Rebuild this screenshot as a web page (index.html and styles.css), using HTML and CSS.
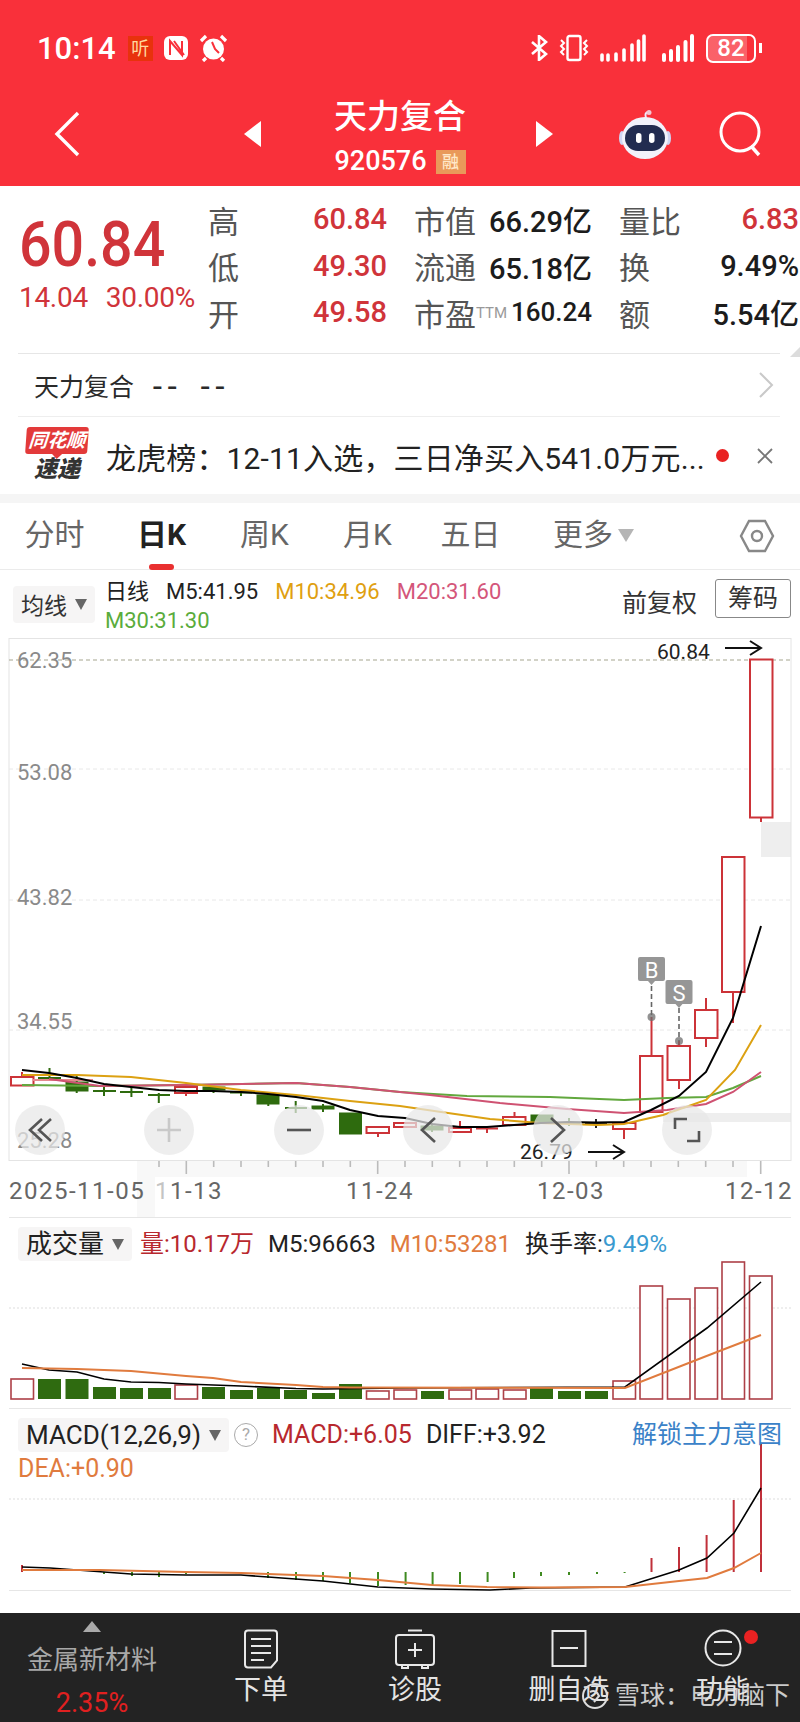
FILE: index.html
```html
<!DOCTYPE html>
<html lang="zh-CN">
<head>
  <meta charset="UTF-8">
  <meta name="viewport" content="width=device-width, initial-scale=1.0">
  <title>天力复合 920576</title>
  <link rel="stylesheet" href="styles.css">
</head>
<body>
  <header class="topbar">
    <div class="status">
      <span class="clock">10:14</span>
      <span class="app-badge">听</span>
      <svg width="26" height="26" viewBox="0 0 26 26"><rect x="1" y="1" width="24" height="24" rx="6" fill="#fff"/><path d="M7 20V6l12 14V6M11 6l10 14" fill="none" stroke="#f9303a" stroke-width="2"/></svg>
      <svg width="29" height="28" viewBox="0 0 29 28"><circle cx="14.500" cy="15" r="10.500" fill="#fff"/><path d="M13 8l3 7 4 4" fill="none" stroke="#f9303a" stroke-width="2"/><path d="M2 7l5-5M27 7l-5-5M7 24l-3 3M22 24l3 3" stroke="#fff" stroke-width="3.200"/></svg>
      <span class="spacer"></span>
      <svg width="18" height="26" viewBox="0 0 18 26"><path d="M2 7l14 12-7 6V1l7 6L2 19" fill="none" stroke="#fff" stroke-width="2.600"/></svg>
      <svg width="32" height="28" viewBox="0 0 32 28"><rect x="9.500" y="2" width="13" height="24" rx="2" fill="none" stroke="#fff" stroke-width="2.400"/><path d="M3 6l3 3-3 3 3 3-3 3 3 3M29 6l-3 3 3 3-3 3 3 3-3 3" fill="none" stroke="#fff" stroke-width="2"/></svg>
      <svg width="46" height="28" viewBox="0 0 46 28"><path d="M2 21v5M8 21v5M16 20v6M24 16v10M32 11v15M38.500 7v19M44 2v24" stroke="#fff" stroke-width="3.600" stroke-linecap="round"/></svg>
      <svg class="signal-b" width="32" height="28" viewBox="0 0 32 28"><path d="M2 21v5M9 17v9M16 13v13M23.500 8v18M30 2v24" stroke="#fff" stroke-width="4" stroke-linecap="round"/></svg>
      <span class="battery">82</span>
      <span class="battery-tip"></span>
    </div>
    <nav class="nav">
      <svg class="back" width="28" height="46" viewBox="0 0 28 46"><path d="M25 2L4 23l21 21" fill="none" stroke="#fff" stroke-width="3.400"/></svg>
      <span class="arrow arrow-left"></span>
      <div class="title">
        <h1>天力复合</h1>
        <p>920576<span class="rong">融</span></p>
      </div>
      <span class="arrow arrow-right"></span>
      <svg class="robot" width="54" height="50" viewBox="0 0 54 50">
        <path d="M28 9q-2-6 3-6" fill="none" stroke="#eef" stroke-width="2"/>
        <circle cx="31" cy="3.500" r="2.500" fill="#f3c6d2"/>
        <ellipse cx="4" cy="29" rx="3" ry="7" fill="#cfd4f2"/>
        <ellipse cx="50" cy="29" rx="3" ry="7" fill="#cfd4f2"/>
        <ellipse cx="27" cy="29" rx="23" ry="21" fill="#f2f2fb"/>
        <rect x="7" y="16" width="40" height="26" rx="13" fill="#222c50"/>
        <rect x="18" y="24" width="5.500" height="10" rx="2.700" fill="#fff"/>
        <rect x="31" y="24" width="5.500" height="10" rx="2.700" fill="#fff"/>
      </svg>
      <svg class="search" width="44" height="46" viewBox="0 0 44 46"><circle cx="21" cy="21" r="19" fill="none" stroke="#fff" stroke-width="3"/><path d="M32 35l8 9" stroke="#fff" stroke-width="3.400"/></svg>
    </nav>
  </header>

  <section class="quote">
    <div class="price-box">
      <div class="price">60.84</div>
      <div class="change"><span>14.04</span><span>30.00%</span></div>
    </div>
    <div class="stats">
      <div class="stat"><span class="lbl">高</span><span class="val red">60.84</span></div>
      <div class="stat"><span class="lbl">市值</span><span class="val">66.29亿</span></div>
      <div class="stat"><span class="lbl">量比</span><span class="val red">6.83</span></div>
      <div class="stat"><span class="lbl">低</span><span class="val red">49.30</span></div>
      <div class="stat"><span class="lbl">流通</span><span class="val">65.18亿</span></div>
      <div class="stat"><span class="lbl">换</span><span class="val">9.49%</span></div>
      <div class="stat"><span class="lbl">开</span><span class="val red">49.58</span></div>
      <div class="stat"><span class="lbl">市盈<sup class="ttm">TTM</sup></span><span class="val small">160.24</span></div>
      <div class="stat"><span class="lbl">额</span><span class="val">5.54亿</span></div>
    </div>
    <span class="corner"></span>
  </section>

  <section class="name-row">
    <span>天力复合</span><span class="dash">--</span><span class="dash">--</span>
    <svg class="chev" width="16" height="26" viewBox="0 0 16 26"><path d="M2 1l12 12L2 25" fill="none" stroke="#c9c9c9" stroke-width="2"/></svg>
  </section>

  <section class="news">
    <div class="logo">
      <span class="logo-top">同花顺</span>
      <span class="logo-bottom">速递</span>
    </div>
    <p class="headline">龙虎榜：12-11入选，三日净买入541.0万元...</p>
    <span class="dot"></span>
    <svg class="close" width="18" height="18" viewBox="0 0 18 18"><path d="M2 2l14 14M16 2L2 16" stroke="#777" stroke-width="1.800"/></svg>
  </section>

  <div class="band"></div>

  <nav class="tabs">
    <span class="tab">分时</span>
    <span class="tab active">日K</span>
    <span class="tab">周K</span>
    <span class="tab">月K</span>
    <span class="tab">五日</span>
    <span class="tab more">更多<i class="caret"></i></span>
    <svg class="hex" width="36" height="36" viewBox="0 0 36 36"><path d="M10 3h16l8 15-8 15H10L2 18z" fill="none" stroke="#888" stroke-width="2.400"/><circle cx="18" cy="18" r="5" fill="none" stroke="#888" stroke-width="2.400"/></svg>
  </nav>

  <section class="legend">
    <div class="selector">均线<i class="caret dark"></i></div>
    <div class="ma-list">
      <span class="ma-name">日线</span>
      <span>M5:41.95</span>
      <span class="c-yellow">M10:34.96</span>
      <span class="c-pink">M20:31.60</span>
      <span class="c-green ma-wrap">M30:31.30</span>
    </div>
    <span class="fq">前复权</span>
    <span class="chip">筹码</span>
  </section>

  <section class="kline">
    <svg class="plot" width="800" height="579" viewBox="0 638 800 579">
      <rect class="ghost" x="761" y="822" width="30" height="35"/>
      <rect class="ghost" x="663" y="1113" width="128" height="9"/>
      <rect class="ghost faint" x="137" y="1160" width="610" height="17"/>
      <rect class="ghost faint" x="137" y="1160" width="18" height="57"/>
      <rect class="frame" x="9" y="638.500" width="782" height="522"/>
      <line class="top-grid" x1="9" y1="660" x2="791" y2="660"/>
      <line class="grid" x1="9" y1="769" x2="791" y2="769"/>
      <line class="grid" x1="9" y1="900" x2="791" y2="900"/>
      <line class="grid" x1="9" y1="1030" x2="791" y2="1030"/>

      <text class="axis-y" x="17" y="668">62.35</text>
      <text class="axis-y" x="17" y="780">53.08</text>
      <text class="axis-y" x="17" y="905">43.82</text>
      <text class="axis-y" x="17" y="1029">34.55</text>
      <text class="axis-y" x="17" y="1148">25.28</text>

      <g class="down">
        <path d="M49.500 1068v12M38 1078h23"/>
        <path d="M76.700 1076v17"/><rect x="66" y="1082" width="22" height="9"/>
        <path d="M104 1086v10M93 1091h23"/>
        <path d="M131.400 1087v10M120 1092h23"/>
        <path d="M158.800 1093v10M148 1095h22"/>
        <path d="M213.500 1087v6"/><rect x="203" y="1087" width="22" height="3"/>
        <path d="M241 1091v5M230 1092.500h22"/>
        <path d="M268.300 1095v11"/><rect x="257" y="1095" width="22" height="9"/>
        <path d="M295.700 1101v12M285 1108h22"/>
        <path d="M323 1104v8"/><rect x="312" y="1106" width="22" height="3"/>
        <rect x="339.500" y="1113" width="22" height="21"/>
        <path d="M432 1123v9"/><rect x="421" y="1126" width="22" height="4"/>
        <rect x="531" y="1115" width="22" height="7"/>
        <path d="M569 1118v8M558 1123h22"/>
        <path d="M596 1119v9M585 1123h22" class="black"/>
      </g>
      <g class="up">
        <path d="M22 1072v4"/><rect x="11" y="1077" width="22.500" height="8.500"/>
        <path d="M33 1080h60" class="pale"/>
        <path d="M186 1085v2M186 1093v3"/><rect x="175" y="1087" width="22" height="6"/>
        <path d="M378 1133v4"/><rect x="366.500" y="1127" width="22.500" height="6"/>
        <rect x="394" y="1123" width="22" height="4"/>
        <path d="M460 1121v7M460 1132v1"/><rect x="449" y="1128" width="22" height="4"/>
        <path d="M487 1127v6M476 1128.500h22"/>
        <path d="M514.500 1112v5"/><rect x="503" y="1117" width="22.500" height="8"/>
        <path d="M624 1129v10"/><rect x="613" y="1123" width="22.500" height="6"/>
        <path d="M651.500 1017v39"/><rect x="640" y="1056" width="22.500" height="56"/>
        <path d="M679 1041v5M679 1080v9"/><rect x="667.500" y="1046" width="22.500" height="34"/>
        <path d="M706 998v12M706 1038v9"/><rect x="695" y="1010" width="22.500" height="28"/>
        <path d="M733 992v31"/><rect x="722" y="857" width="22.500" height="135"/>
        <path d="M761 818v4"/><rect x="750" y="659.500" width="22.500" height="158"/>
      </g>

      <polyline class="ma green" points="22,1085 100,1086 186,1085 241,1084 296,1083 350,1087 400,1092 467,1096 550,1097 624,1100 667,1098 706,1097 733,1088 761,1076"/>
      <polyline class="ma pink" points="49,1079 100,1086 186,1085 296,1083 350,1087 430,1095 500,1103 567,1109 624,1113 667,1110 706,1104 733,1092 761,1072"/>
      <polyline class="ma yellow" points="22,1075 77,1075 131,1077 186,1083 241,1090 296,1095 350,1101 400,1106 448,1113 490,1119 540,1123 597,1125 624,1124 663,1115 706,1100 735,1070 761,1025"/>
      <polyline class="ma black" points="22,1070 49,1073 77,1078 104,1084 131,1087 159,1090 186,1091 213,1091 241,1092 268,1094 296,1097 323,1101 350,1110 378,1116 405,1118 432,1124 460,1127 487,1127 514,1125 541,1123 569,1122 596,1122.500 624,1122 651,1110 679,1096 706,1072 733,1018 761,926"/>

      <text class="extreme" x="657" y="659">60.84</text>
      <path class="pointer" d="M725 648h36m-11-7l11 7-11 7"/>
      <text class="extreme" x="520" y="1159">26.79</text>
      <path class="pointer" d="M588 1152h36m-11-7l11 7-11 7"/>

      <path class="flag-line" d="M651.500 986v31M679 1008v33"/>
      <circle class="flag-dot" cx="651.500" cy="1017" r="4"/>
      <circle class="flag-dot" cx="679" cy="1041" r="4"/>
      <path class="flag" d="M640 957h23q2 0 2 2v20q0 2-2 2h-8l-3.500 4-3.500-4h-8q-2 0-2-2v-20q0-2 2-2z"/>
      <path class="flag" d="M667.500 980h23q2 0 2 2v20q0 2-2 2h-8l-3.500 4-3.500-4h-8q-2 0-2-2v-20q0-2 2-2z"/>
      <text class="flag-text" x="651.500" y="978">B</text>
      <text class="flag-text" x="679" y="1001">S</text>

      <path class="tick" d="M159 1161v6M186.300 1161v13M213.700 1161v6M241 1161v6M268.300 1161v6M295.700 1161v6M323 1161v6M350.300 1161v6M377.700 1161v13M405 1161v6M432.300 1161v6M459.700 1161v6M487 1161v6M514.300 1161v6M541.700 1161v6M569 1161v13M596.300 1161v6M623.700 1161v6M651 1161v6M678.300 1161v6M705.700 1161v6M733 1161v6M760.700 1161v13"/>
      <text class="axis-x" x="9" y="1199">2025-11-05</text>
      <text class="axis-x" x="155" y="1199"><tspan class="axis-fade">1</tspan>1-13</text>
      <text class="axis-x" x="346" y="1199">11-24</text>
      <text class="axis-x" x="537" y="1199">12-03</text>
      <text class="axis-x" x="725" y="1199">12-12</text>
    </svg>
    <div class="zoom-row">
      <button class="zoom-btn"><svg width="26" height="26" viewBox="0 0 26 26"><path d="M15 2L3 13l12 11M24 2L12 13l12 11" fill="none" stroke="#555" stroke-width="2.600"/></svg></button>
      <button class="zoom-btn"><svg width="26" height="26" viewBox="0 0 26 26"><path d="M13 1v24M1 13h24" fill="none" stroke="#c9c9c9" stroke-width="2.600"/></svg></button>
      <button class="zoom-btn"><svg width="26" height="26" viewBox="0 0 26 26"><path d="M1 13h24" fill="none" stroke="#555" stroke-width="2.600"/></svg></button>
      <button class="zoom-btn"><svg width="18" height="26" viewBox="0 0 18 26"><path d="M16 1L3 13l13 12" fill="none" stroke="#555" stroke-width="2.600"/></svg></button>
      <button class="zoom-btn"><svg width="18" height="26" viewBox="0 0 18 26"><path d="M2 1l13 12L2 25" fill="none" stroke="#555" stroke-width="2.600"/></svg></button>
      <button class="zoom-btn"><svg width="28" height="26" viewBox="0 0 28 26"><path d="M14 2H2v10M14 24h12V14" fill="none" stroke="#555" stroke-width="2.600"/></svg></button>
    </div>
  </section>

  <section class="panel vol">
    <div class="panel-head">
      <div class="selector big">成交量<i class="caret dark"></i></div>
      <span class="c-red">量:10.17万</span>
      <span>M5:96663</span>
      <span class="c-orange">M10:53281</span>
      <span>换手率:<b class="c-blue">9.49%</b></span>
    </div>
    <svg class="plot" width="800" height="191" viewBox="0 1217 800 191">
      <line class="grid dotted" x1="9" y1="1308" x2="791" y2="1308"/>
      <g class="bars-down">
        <rect x="38" y="1379" width="23" height="20"/>
        <rect x="65.500" y="1379" width="23" height="20"/>
        <rect x="93" y="1387" width="23" height="12"/>
        <rect x="120" y="1388" width="23" height="11"/>
        <rect x="148" y="1388" width="23" height="11"/>
        <rect x="202" y="1387" width="23" height="12"/>
        <rect x="230" y="1390" width="23" height="9"/>
        <rect x="257" y="1388" width="23" height="11"/>
        <rect x="284" y="1390" width="23" height="9"/>
        <rect x="312" y="1393" width="23" height="6"/>
        <rect x="339" y="1384" width="23" height="15"/>
        <rect x="421" y="1391" width="23" height="8"/>
        <rect x="530" y="1388" width="23" height="11"/>
        <rect x="558" y="1391" width="23" height="8"/>
        <rect x="585" y="1391" width="23" height="8"/>
      </g>
      <g class="bars-up">
        <rect x="11" y="1379" width="22.500" height="20"/>
        <rect x="175" y="1385" width="22.500" height="14"/>
        <rect x="366.500" y="1391" width="22.500" height="8"/>
        <rect x="394" y="1390" width="22.500" height="9"/>
        <rect x="449" y="1390" width="22.500" height="9"/>
        <rect x="476" y="1389" width="22.500" height="10"/>
        <rect x="503.500" y="1390" width="22.500" height="9"/>
        <rect x="613" y="1381" width="22.500" height="18"/>
        <rect x="640" y="1286" width="22.500" height="113"/>
        <rect x="667.500" y="1299" width="22.500" height="100"/>
        <rect x="695" y="1288" width="22.500" height="111"/>
        <rect x="722" y="1262" width="22.500" height="137"/>
        <rect x="749.500" y="1276" width="22.500" height="123"/>
      </g>
      <polyline class="ma thin black" points="22,1364 49,1370 77,1372 104,1379 131,1382 159,1382.500 186,1384 213,1385 241,1386 296,1388.500 323,1389 400,1388 625,1387 707,1328 761,1282"/>
      <polyline class="ma orange" points="22,1368 77,1369 131,1371 186,1376 213,1378 241,1382 296,1385 323,1387 350,1387.500 625,1388 704,1357 761,1335"/>
    </svg>
  </section>

  <section class="panel macd">
    <div class="panel-head">
      <div class="selector big">MACD(12,26,9)<i class="caret dark"></i></div>
      <span class="help">?</span>
      <span class="c-red">MACD:+6.05</span>
      <span>DIFF:+3.92</span>
      <a class="unlock">解锁主力意图</a>
      <span class="c-orange dea">DEA:+0.90</span>
    </div>
    <svg class="plot" width="800" height="183" viewBox="0 1408 800 183">
      <line class="grid dotted" x1="9" y1="1499" x2="791" y2="1499"/>
      <rect class="frame-bottom" x="9" y="1590" width="782" height="1"/>
      <path class="stick-up" d="M22 1565v7M651.500 1558v14M679 1547v25M706.600 1535v37M733.700 1500v72M761 1443v129"/>
      <path class="stick-down" d="M104 1572v2M132 1572v4M159 1572v5M186 1572v2M268 1572v6M296 1572v8M323 1572v9M350 1572v11M378 1572v14M405.600 1572v13M432.600 1572v13M460 1572v12M487.600 1572v10M514 1572v6M541 1572v4M569 1572v3M597 1572v2M624.600 1572v1"/>
      <polyline class="ma thin black" points="22,1567 50,1568 77,1570 131,1574 186,1575 241,1575 268,1577 323,1581 378,1587 432,1589 490,1590 530,1588 625,1587 679,1570 707,1558 734,1533 761,1488"/>
      <polyline class="ma orange" points="22,1570 100,1570 186,1572 241,1573 323,1576 378,1580 432,1585 487,1587 541,1587.500 625,1587 679,1581 707,1578 734,1568 761,1553"/>
    </svg>
  </section>

  <footer class="dock">
    <div class="sector">
      <i class="up-tri"></i>
      <span class="sector-name">金属新材料</span>
      <span class="sector-pct">2.35%</span>
    </div>
    <div class="dock-item">
      <svg width="36" height="40" viewBox="0 0 36 40"><path d="M5 1.500h26q3 0 3 3v27l-6 7H5q-3 0-3-3v-31q0-3 3-3z" fill="none" stroke="#e8e8e8" stroke-width="2"/><path d="M8 10h20M8 17h20M8 24h20M8 31h13" stroke="#e8e8e8" stroke-width="2"/></svg>
      <span>下单</span>
    </div>
    <div class="dock-item">
      <svg width="42" height="40" viewBox="0 0 42 40"><path d="M14 1.500h14M5 6h32q3 0 3 3v24q0 3-3 3H5q-3 0-3-3V9q0-3 3-3zM8 36v3h6v-3M28 36v3h6v-3" fill="none" stroke="#e8e8e8" stroke-width="2"/><path d="M21 14v14M14 21h14" stroke="#e8e8e8" stroke-width="2"/></svg>
      <span>诊股</span>
    </div>
    <div class="dock-item">
      <svg width="36" height="40" viewBox="0 0 36 40"><rect x="1.500" y="2" width="33" height="35" fill="none" stroke="#e8e8e8" stroke-width="2"/><path d="M9 19h18" stroke="#e8e8e8" stroke-width="2"/></svg>
      <span>删自选</span>
    </div>
    <div class="dock-item">
      <svg width="38" height="40" viewBox="0 0 38 40"><circle cx="19" cy="19" r="17.500" fill="none" stroke="#e8e8e8" stroke-width="2"/><path d="M10 13h18M10 25h18" stroke="#e8e8e8" stroke-width="2"/></svg>
      <span>功能</span>
      <i class="dock-dot"></i>
    </div>
    <div class="watermark"><svg width="28" height="28" viewBox="0 0 28 28"><circle cx="14" cy="14" r="12" fill="none" stroke="#ddd" stroke-width="2"/><path d="M9 10q6-3 9 4l-5 6" fill="none" stroke="#ddd" stroke-width="2"/></svg>雪球：电力脑下</div>
  </footer>
</body>
</html>
```

FILE: styles.css
```css
* {
  margin: 0;
  padding: 0;
  box-sizing: border-box;
}

body {
  position: relative;
  width: 800px;
  height: 1722px;
  overflow: hidden;
  background: #fff;
  color: #222;
  font-family: Roboto, "Noto Sans CJK SC", sans-serif;
}

/* top red block */
.topbar {
  height: 186px;
  background: #f9303a;
  color: #fff;
  padding-top: 30px;
}

.status {
  display: flex;
  align-items: center;
  height: 36px;
  padding: 0 38px 0 37px;
  gap: 10px;
}

.clock {
  font-size: 31px;
  font-weight: 500;
  margin-right: 2px;
}

.app-badge {
  width: 25px;
  height: 25px;
  background: #e8320c;
  color: #ffd9a0;
  font-size: 18px;
  line-height: 25px;
  text-align: center;
}

.spacer {
  flex: 1;
}

.signal-b {
  margin-left: 6px;
}

.battery {
  width: 50px;
  height: 29px;
  margin-left: 2px;
  border: 2px solid #fff;
  border-radius: 7px;
  background: linear-gradient(to right, rgba(255, 255, 255, 0.24) 84%, transparent 84%);
  font-size: 24px;
  font-weight: 500;
  line-height: 25px;
  text-align: center;
}

.battery-tip {
  width: 3px;
  height: 10px;
  margin-left: -7px;
  background: #fff;
}

.nav {
  position: relative;
  display: flex;
  align-items: center;
  height: 114px;
  padding: 22px 0 0 53px;
}

.title {
  position: absolute;
  left: 300px;
  width: 200px;
  top: 29px;
  text-align: center;
}

.title h1 {
  font-size: 33px;
  font-weight: 500;
  line-height: 44px;
}

.title p {
  font-size: 27px;
  font-weight: 500;
  line-height: 32px;
  margin-top: 6px;
}

.rong {
  display: inline-block;
  width: 30px;
  height: 24px;
  margin-left: 9px;
  background: #e9995a;
  color: #ffe8c8;
  font-size: 17px;
  line-height: 24px;
  vertical-align: 2px;
}

.arrow {
  width: 0;
  height: 0;
  border-top: 13px solid transparent;
  border-bottom: 13px solid transparent;
}

.arrow-left {
  border-right: 17px solid #fff;
  margin-left: 163px;
}

.arrow-right {
  border-left: 17px solid #fff;
  margin-left: 275px;
}

.robot {
  margin-left: 65px;
}

.search {
  margin-left: 47px;
}

/* quote */
.quote {
  position: relative;
  display: flex;
  height: 167px;
  padding: 10px 0 0 19px;
}

.price-box {
  width: 189px;
  color: #d0343a;
}

.price {
  font-size: 63px;
  font-weight: 500;
  line-height: 60px;
  margin-top: 19px;
  transform: scaleX(0.91);
  transform-origin: left;
}

.change {
  display: flex;
  gap: 18px;
  font-size: 28px;
  letter-spacing: -0.3px;
  line-height: 32px;
  margin-top: 7px;
  white-space: nowrap;
}

.stats {
  display: grid;
  grid-template-columns: 179px 178px 180px;
  grid-auto-rows: 46.5px;
  column-gap: 27px;
  flex: none;
}

.stat {
  display: flex;
  align-items: center;
  justify-content: space-between;
  white-space: nowrap;
}

.lbl {
  font-size: 31px;
  color: #555;
}

.ttm {
  font-size: 15px;
  color: #999;
  vertical-align: 8px;
  line-height: 0;
}

.val {
  font-size: 29px;
  font-weight: 500;
  color: #1c1c1c;
}

.val.red {
  color: #d0343a;
}

.val.small {
  font-size: 26px;
}

.corner {
  position: absolute;
  right: 0;
  bottom: -4px;
  width: 10px;
  height: 10px;
  background: #dcdcdc;
  clip-path: polygon(100% 0, 100% 100%, 0 100%);
}

/* name row and news */
.name-row {
  display: flex;
  align-items: center;
  gap: 18px;
  height: 64px;
  margin: 0 20px 0 18px;
  padding-left: 16px;
  border-top: 1px solid #e6e6e6;
  border-bottom: 1px solid #eee;
  font-size: 25px;
  color: #2a2a2a;
}

.dash {
  font-family: "DejaVu Sans", sans-serif;
  font-size: 30px;
  letter-spacing: 4px;
}

.chev {
  margin-left: auto;
  margin-right: 6px;
}

.news {
  display: flex;
  align-items: center;
  height: 77px;
  padding-left: 26px;
}

.logo {
  width: 62px;
  text-align: center;
  font-style: italic;
  font-weight: 700;
}

.logo-top {
  display: block;
  position: relative;
  height: 27px;
  background: #e33a3a;
  color: #fff;
  border-radius: 3px;
  font-size: 19px;
  line-height: 27px;
  transform: skewX(-4deg);
}

.logo-top::after {
  content: "";
  position: absolute;
  left: 27px;
  bottom: -5px;
  border-top: 5px solid #e33a3a;
  border-left: 5px solid transparent;
  border-right: 5px solid transparent;
}

.logo-bottom {
  display: block;
  margin-top: 2px;
  color: #333;
  font-size: 23px;
  line-height: 28px;
  font-weight: 900;
}

.headline {
  margin-left: 18px;
  width: 607px;
  font-size: 30px;
  letter-spacing: 0.15px;
  color: #222;
  white-space: nowrap;
}

.dot {
  width: 13px;
  height: 13px;
  margin-left: 3px;
  border-radius: 50%;
  background: #e92222;
}

.close {
  margin-left: 27px;
}

.band {
  height: 9px;
  background: #f5f5f5;
}

/* tabs */
.tabs {
  position: relative;
  display: flex;
  align-items: center;
  height: 67px;
  padding-left: 3px;
  border-bottom: 1px solid #ebebeb;
}

.tab {
  width: 103px;
  font-size: 30px;
  line-height: 40px;
  margin-top: -2px;
  color: #666;
  text-align: center;
}

.tab.active {
  position: relative;
  margin-left: 4px;
  font-weight: 700;
  color: #222;
}

.tab.active::after {
  content: "";
  position: absolute;
  left: 39px;
  bottom: -15px;
  width: 25px;
  height: 6px;
  border-radius: 3px;
  background: #e93030;
}

.tab.more {
  width: 125px;
  margin-left: 9px;
}

.caret {
  display: inline-block;
  width: 0;
  height: 0;
  margin-left: 5px;
  vertical-align: 3px;
  border-top: 13px solid #b5b5b5;
  border-left: 8px solid transparent;
  border-right: 8px solid transparent;
}

.caret.dark {
  border-top: 11px solid #666;
  border-left: 6px solid transparent;
  border-right: 6px solid transparent;
  margin-left: 8px;
}

.hex {
  position: absolute;
  right: 25px;
  top: 15px;
}

/* moving average legend */
.legend {
  display: flex;
  align-items: center;
  height: 68px;
  padding: 0 9px 0 13px;
}

.selector {
  display: flex;
  align-items: center;
  flex: none;
  width: 82px;
  height: 37px;
  padding-left: 8px;
  border-radius: 4px;
  background: #f6f5f5;
  font-size: 23px;
  color: #333;
  white-space: nowrap;
}

.ma-list {
  display: flex;
  flex-wrap: wrap;
  align-items: center;
  column-gap: 17px;
  width: 500px;
  margin-left: 10px;
  margin-top: 3px;
  font-size: 22px;
  line-height: 29px;
  color: #222;
}

.ma-wrap {
  width: 100%;
}

.c-yellow {
  color: #e0a010;
}

.c-pink {
  color: #d4567a;
}

.c-green {
  color: #5aac3c;
}

.fq {
  margin-left: auto;
  margin-top: -6px;
  font-size: 25px;
  color: #333;
}

.chip {
  width: 76px;
  height: 39px;
  margin-left: 18px;
  margin-top: 9px;
  border: 1px solid #888;
  border-radius: 3px;
  font-size: 25px;
  line-height: 37px;
  text-align: center;
  color: #333;
  align-self: flex-start;
}

/* charts */
.kline {
  position: relative;
  height: 579px;
}

.plot {
  display: block;
}

.ghost {
  fill: #eee;
}

.ghost.faint {
  fill: #f8f8f8;
}

.frame {
  fill: none;
  stroke: #e4e4e4;
  stroke-width: 1;
}

.grid {
  stroke: #e8e8e8;
  stroke-width: 1;
  stroke-dasharray: 4 3;
}

.grid.dotted {
  stroke: #ddd;
  stroke-dasharray: 2 2;
}

.top-grid {
  stroke: #a5a58f;
  stroke-width: 1;
  stroke-dasharray: 4 3;
}

.axis-y {
  font-size: 22px;
  fill: #8a8a8a;
}

.axis-x {
  font-size: 24px;
  fill: #666;
  letter-spacing: 1.5px;
}

.axis-fade {
  fill: #c4c4c4;
}

.extreme {
  font-size: 21px;
  fill: #222;
}

.pointer {
  fill: none;
  stroke: #111;
  stroke-width: 2;
}

.down path {
  fill: none;
  stroke: #2e6b0e;
  stroke-width: 2;
}

.down rect {
  fill: #2e6b0e;
  stroke: #2e6b0e;
}

.down path.black {
  stroke: #222;
}

.up path {
  fill: none;
  stroke: #cc3338;
  stroke-width: 2;
}

.up path.pale {
  stroke: #e58a8e;
}

.up rect {
  fill: #fff;
  stroke: #cc3338;
  stroke-width: 2;
}

.ma {
  fill: none;
  stroke-width: 2;
}

.ma.black {
  stroke: #000;
}

.ma.thin {
  stroke-width: 1.6;
}

.ma.yellow {
  stroke: #dca112;
}

.ma.pink {
  stroke: #cf5272;
}

.ma.green {
  stroke: #62a83e;
}

.ma.orange {
  stroke: #e07b3e;
}

.flag-line {
  stroke: #666;
  stroke-width: 1.6;
  stroke-dasharray: 5 3;
  fill: none;
}

.flag-dot {
  fill: rgba(110, 110, 110, 0.75);
}

.flag {
  fill: #969696;
}

.flag-text {
  font-size: 22px;
  fill: #fff;
  text-anchor: middle;
}

.tick {
  stroke: #bbb;
  stroke-width: 1.6;
  fill: none;
}

.zoom-row {
  position: absolute;
  left: 15px;
  top: 467px;
  display: flex;
  gap: 79.4px;
}

.zoom-btn {
  display: flex;
  align-items: center;
  justify-content: center;
  width: 50px;
  height: 50px;
  border: none;
  border-radius: 50%;
  background: rgba(232, 232, 232, 0.72);
}

/* volume and macd panels */
.panel {
  position: relative;
  height: 191px;
}

.panel .plot {
  position: absolute;
  left: 0;
  top: 0;
}

.panel-head {
  position: relative;
  z-index: 1;
  display: flex;
  align-items: center;
  gap: 14px;
  padding: 10px 9px 0 18px;
  font-size: 24px;
  line-height: 34px;
  color: #222;
  white-space: nowrap;
}

.selector.big {
  width: auto;
  height: 34px;
  padding: 0 8px;
  font-size: 26px;
  color: #222;
  margin-right: -6px;
}

.vol::before,
.vol::after {
  content: "";
  position: absolute;
  left: 9px;
  width: 782px;
  height: 1px;
  background: #e6e6e6;
}

.vol::before {
  top: 0;
}

.vol::after {
  top: 191px;
}

.macd {
  height: 183px;
}

.macd .panel-head {
  flex-wrap: wrap;
  row-gap: 0;
  padding-right: 18px;
  font-size: 25px;
}

.frame-bottom {
  fill: #e6e6e6;
}

.stick-up {
  stroke: #c0303a;
  stroke-width: 2;
  fill: none;
}

.stick-down {
  stroke: #3f8a20;
  stroke-width: 2;
  fill: none;
}

.bars-down rect {
  fill: #2f6b10;
}

.bars-up rect {
  fill: #fff;
  stroke: #ad4048;
  stroke-width: 1.6;
}

.c-red {
  color: #b8282e;
}

.c-orange {
  color: #e07b3e;
}

.c-blue {
  color: #3a9ad0;
  font-weight: 400;
}

.help {
  width: 24px;
  height: 24px;
  margin-left: -3px;
  border: 1.5px solid #aaa;
  border-radius: 50%;
  font-size: 17px;
  line-height: 21px;
  color: #aaa;
  text-align: center;
}

.unlock {
  margin-left: auto;
  color: #3b82c8;
}

.dea {
  width: 100%;
}

/* bottom dock */
.dock {
  position: absolute;
  left: 0;
  top: 1613px;
  width: 800px;
  height: 109px;
  display: flex;
  background: #232323;
  color: #e4e4e4;
}

.sector {
  display: flex;
  flex-direction: column;
  align-items: center;
  width: 184px;
  padding-top: 8px;
}

.up-tri {
  border-bottom: 11px solid #aaa;
  border-left: 9px solid transparent;
  border-right: 9px solid transparent;
}

.sector-name {
  margin-top: 10px;
  font-size: 26px;
  line-height: 36px;
  color: #a8a8a8;
}

.sector-pct {
  font-size: 27px;
  line-height: 36px;
  margin-top: 7px;
  color: #e02020;
}

.dock-item {
  position: relative;
  display: flex;
  flex-direction: column;
  align-items: center;
  width: 154px;
  padding-top: 16px;
  font-size: 27px;
  line-height: 38px;
}

.dock-item span {
  margin-top: 2px;
}

.dock-dot {
  position: absolute;
  left: 98px;
  top: 17px;
  width: 14px;
  height: 14px;
  border-radius: 50%;
  background: #e92222;
}

.watermark {
  position: absolute;
  left: 581px;
  top: 67px;
  display: flex;
  align-items: center;
  gap: 6px;
  font-size: 25px;
  line-height: 32px;
  color: rgba(228, 228, 228, 0.88);
  white-space: nowrap;
}
```
